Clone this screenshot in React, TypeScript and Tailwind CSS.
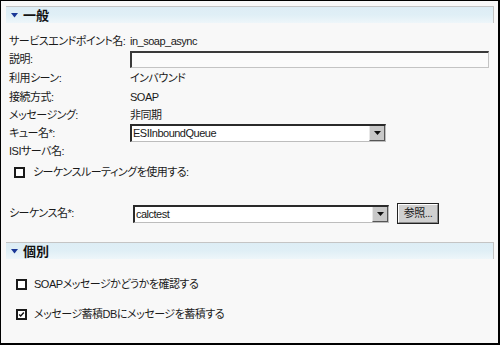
import React from "react";

const font = "[font-family:'Liberation_Sans','Noto_Sans_CJK_JP',sans-serif] [font-feature-settings:'palt']";
const txt = "text-[11px] leading-none tracking-[-0.5px] text-[#1a1a1a] whitespace-nowrap";

function Header({ title }: { title: string }) {
  return (
    <div className="ml-[5px] w-[488px] h-[17px] flex items-center border-t border-r border-[#c4c4c4] bg-gradient-to-b from-[#ddedf5] via-[#e0eff6] to-[#eef6fa]">
      <svg width="7" height="5" viewBox="0 0 7 5" className="ml-[5px]">
        <polygon points="0,0 7,0 3.5,4.5" fill="#1a3796" />
      </svg>
      <span className="ml-[5px] text-[13px] font-bold leading-none text-[#111]">{title}</span>
    </div>
  );
}

function Check({ checked }: { checked?: boolean }) {
  return (
    <div className="w-[11px] h-[11px] border-2 border-[#1a1a1a] bg-white flex items-center justify-center">
      {checked && (
        <svg width="9" height="9" viewBox="0 0 9 9">
          <polyline points="1.5,4.5 3.5,6.5 7.5,2" fill="none" stroke="#111" strokeWidth="1.8" />
        </svg>
      )}
    </div>
  );
}

function Select({ value, width }: { value: string; width: number }) {
  return (
    <div
      className="h-[18px] flex border-t-2 border-l-2 border-[#2a2a2a] border-b border-r border-b-[#bdbdbd] border-r-[#bdbdbd] bg-white"
      style={{ width }}
    >
      <div className={`flex-1 flex items-center pl-[1px] ${txt}`}>{value}</div>
      <div className="w-[16px] h-full bg-[#c8c8c8] border-r border-b border-[#555] border-l border-l-[#e8e8e8] flex items-center justify-center">
        <svg width="7" height="4" viewBox="0 0 7 4">
          <polygon points="0,0 7,0 3.5,4" fill="#111" />
        </svg>
      </div>
    </div>
  );
}

function Row({ h, label, children }: { h: number; label: string; children?: React.ReactNode }) {
  return (
    <div className="flex items-center pl-[8px]" style={{ height: h }}>
      <div className={`w-[121px] ${txt}`}>{label}</div>
      <div className={`flex items-center ${txt}`}>{children}</div>
    </div>
  );
}

export default function App() {
  return (
    <div className={`${font} w-[500px] h-[345px] bg-[#f8f8f8] border-l border-t border-r-2 border-b-2 border-black pt-[5px] overflow-hidden`}>
      <Header title="一般" />
      <div className="mt-[9px]">
        <Row h={18} label="サービスエンドポイント名:">in_soap_async</Row>
        <Row h={18} label="説明:">
          <div className="w-[359px] h-[17px] border-t-2 border-l-2 border-[#3a3a3a] border-b border-r border-b-[#c4c4c4] border-r-[#c4c4c4] bg-[#fbfbfb]" />
        </Row>
        <Row h={21} label="利用シーン:">インバウンド</Row>
        <Row h={17} label="接続方式:">SOAP</Row>
        <Row h={18} label="メッセージング:">非同期</Row>
        <Row h={18} label="キュー名*:">
          <Select value="ESIInboundQueue" width={256} />
        </Row>
        <Row h={19} label="ISIサーバ名:" />
        <div className="h-[22px] flex items-center pl-[13px] gap-[8px]">
          <Check />
          <span className={txt}>シーケンスルーティングを使用する:</span>
        </div>
      </div>
      <div className="mt-[20px] h-[21px] flex items-center pl-[8px]">
        <div className={`w-[124px] ${txt}`}>シーケンス名*:</div>
        <Select value="calctest" width={256} />
        <div className="ml-[8px] w-[42px] h-[21px] border border-[#222] bg-[#d0d0d0] flex items-center justify-center">
          <div className={`w-full h-full border-t border-l border-white border-b border-r border-b-[#888] border-r-[#888] flex items-center justify-center ${txt}`}>
            参照...
          </div>
        </div>
      </div>
      <div className="mt-[18px]">
        <Header title="個別" />
      </div>
      <div className="mt-[16px] h-[18px] flex items-center pl-[15px] gap-[7px]">
        <Check />
        <span className={txt}>SOAPメッセージかどうかを確認する</span>
      </div>
      <div className="mt-[12px] h-[18px] flex items-center pl-[15px] gap-[7px]">
        <Check checked />
        <span className={txt}>メッセージ蓄積DBにメッセージを蓄積する</span>
      </div>
    </div>
  );
}
